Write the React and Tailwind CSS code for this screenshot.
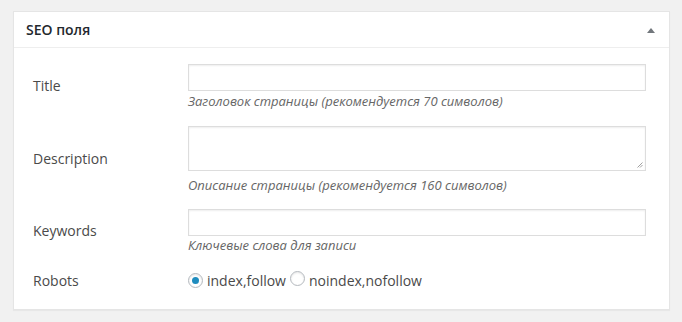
import React from "react";

function Radio({ checked }) {
  return (
    <span className="inline-flex h-[15px] w-[15px] items-center justify-center rounded-full border border-[#b4b9be] bg-white shadow-[inset_0_1px_2px_rgba(0,0,0,0.1)]">
      {checked && <span className="h-[7px] w-[7px] rounded-full bg-[#1e8cbe]" />}
    </span>
  );
}

export default function App() {
  const font = { fontFamily: '"Open Sans", "Noto Sans", sans-serif' };
  return (
    <div className="h-[322px] w-[682px] bg-[#f1f1f1] pt-[11px] pl-[13px]" style={font}>
      <div className="w-[657px] border border-[#e5e5e5] bg-white shadow-[0_1px_1px_rgba(0,0,0,0.04)]">
        <div className="flex h-[36px] items-center justify-between border-b border-[#eeeeee] pl-[12px] pr-[14px]">
          <span className="text-[14px] font-semibold text-[#23282d]">SEO поля</span>
          <svg width="8" height="5" viewBox="0 0 8 5" className="mt-[1px]">
            <polygon points="4,0 8,5 0,5" fill="#72777c" />
          </svg>
        </div>
        <div className="pt-[16px] pl-[19px] pb-[18px] text-[14px] text-[#4a4a4a]">
          <div className="flex items-center">
            <div className="w-[155px] pb-[4px]">Title</div>
            <div className="flex flex-col">
              <div className="h-[27px] w-[458px] border border-[#dddddd] shadow-[inset_0_1px_2px_rgba(0,0,0,0.07)]" />
              <div className="h-[20px] pt-[1px] text-[13px] italic leading-[19px] text-[#666]">
                Заголовок страницы (рекомендуется 70 символов)
              </div>
            </div>
          </div>
          <div className="mt-[15px] flex items-center">
            <div className="w-[155px] pb-[4px]">Description</div>
            <div className="flex flex-col">
              <div className="relative h-[45px] w-[458px] border border-[#dddddd] shadow-[inset_0_1px_2px_rgba(0,0,0,0.07)]">
                <svg width="6" height="6" viewBox="0 0 6 6" className="absolute right-[2px] bottom-[2px]">
                  <line x1="0.5" y1="5.5" x2="5.5" y2="0.5" stroke="#888" strokeWidth="0.8" />
                  <line x1="3" y1="5.5" x2="5.5" y2="3" stroke="#888" strokeWidth="0.8" />
                </svg>
              </div>
              <div className="h-[24px] pt-[5px] text-[13px] italic leading-[19px] text-[#666]">
                Описание страницы (рекомендуется 160 символов)
              </div>
            </div>
          </div>
          <div className="mt-[14px] flex items-center">
            <div className="w-[155px] pb-[4px]">Keywords</div>
            <div className="flex flex-col">
              <div className="h-[27px] w-[458px] border border-[#dddddd] shadow-[inset_0_1px_2px_rgba(0,0,0,0.07)]" />
              <div className="h-[20px] pt-[0px] text-[13px] italic leading-[19px] text-[#666]">
                Ключевые слова для записи
              </div>
            </div>
          </div>
          <div className="mt-[13px] flex h-[22px] items-center">
            <div className="w-[155px]">Robots</div>
            <div className="flex items-center">
              <Radio checked />
              <span className="ml-[4px]">index,follow</span>
              <span className="ml-[4px]"><Radio /></span>
              <span className="ml-[4px]">noindex,nofollow</span>
            </div>
          </div>
        </div>
      </div>
    </div>
  );
}
